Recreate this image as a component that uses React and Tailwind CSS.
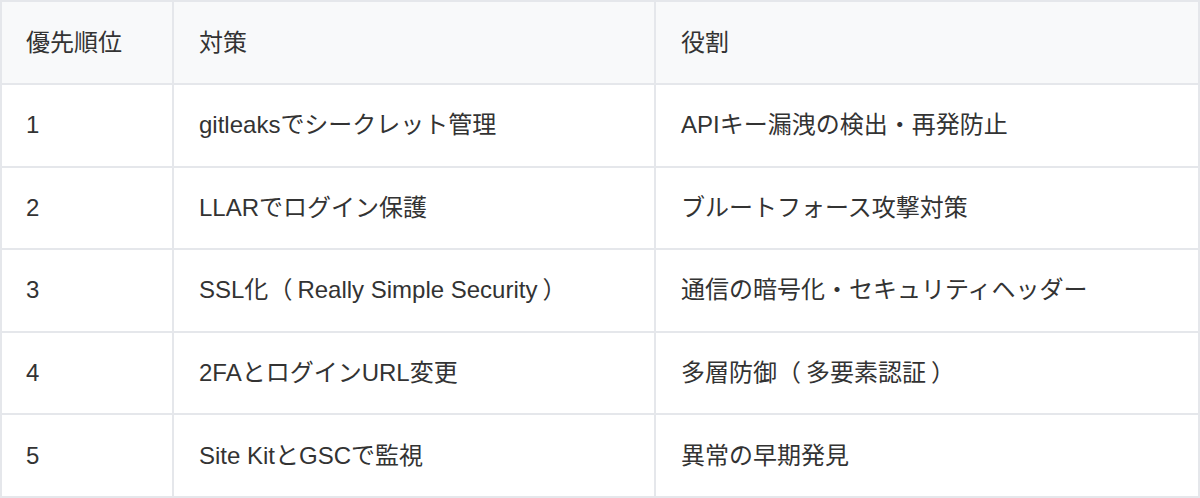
import React from 'react';

// 全角カッコの内側に少し余白を足す
const Open = () => <span className="mr-[5px]">（</span>;
const Close = () => <span className="ml-[5px]">）</span>;

const rows = [
  ['1', 'gitleaksでシークレット管理', 'APIキー漏洩の検出・再発防止'],
  ['2', 'LLARでログイン保護', 'ブルートフォース攻撃対策'],
  ['3', <>SSL化<Open />Really Simple Security<Close /></>, '通信の暗号化・セキュリティヘッダー'],
  ['4', '2FAとログインURL変更', <>多層防御<Open />多要素認証<Close /></>],
  ['5', 'Site KitとGSCで監視', '異常の早期発見'],
];

const App = () => {
  return (
    <div
      className="w-[1200px] h-[498px] bg-white"
      style={{ fontFamily: '"Liberation Sans", "Noto Sans CJK JP", sans-serif' }}
    >
      <table className="w-[1198px] table-fixed border-collapse text-[24px] text-[#333]">
        <colgroup>
          <col className="w-[172px]" />
          <col className="w-[482px]" />
          <col className="w-[544px]" />
        </colgroup>
        <thead>
          <tr className="h-[83px] bg-[#f8f9fa]">
            <th className="border-2 border-[#e5e7eb] px-6 text-left font-normal">優先順位</th>
            <th className="border-2 border-[#e5e7eb] pl-[25px] pr-6 text-left font-normal">対策</th>
            <th className="border-2 border-[#e5e7eb] pl-[25px] pr-6 text-left font-normal">役割</th>
          </tr>
        </thead>
        <tbody>
          {rows.map((r) => (
            <tr key={r[0]} className="h-[82.6px]">
              <td className="border-2 border-[#e5e7eb] px-6">{r[0]}</td>
              <td className="border-2 border-[#e5e7eb] pl-[25px] pr-6 whitespace-nowrap">{r[1]}</td>
              <td className="border-2 border-[#e5e7eb] pl-[25px] pr-6 whitespace-nowrap">{r[2]}</td>
            </tr>
          ))}
        </tbody>
      </table>
    </div>
  );
};

export default App;
